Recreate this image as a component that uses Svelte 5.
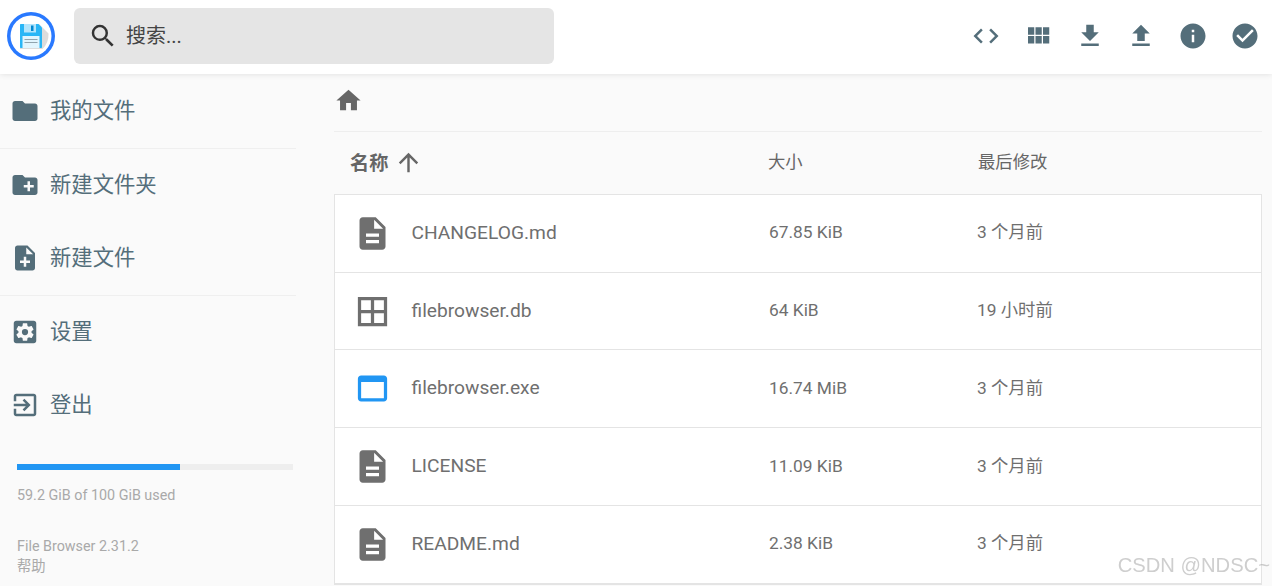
<script>
  const nav = [
    { label: '我的文件', icon: 'folder' },
    { label: '新建文件夹', icon: 'newfolder' },
    { label: '新建文件', icon: 'newfile' },
    { label: '设置', icon: 'settings' },
    { label: '登出', icon: 'logout' }
  ]
  const icons = {
    folder: 'M10 4H4c-1.1 0-2 .9-2 2v12c0 1.1.9 2 2 2h16c1.1 0 2-.9 2-2V8c0-1.1-.9-2-2-2h-8l-2-2z',
    newfolder: 'M20 6h-8l-2-2H4c-1.11 0-1.99.89-1.99 2L2 18c0 1.11.89 2 2 2h16c1.11 0 2-.89 2-2V8c0-1.11-.89-2-2-2zm-1 8h-3v3h-2v-3h-3v-2h3V9h2v3h3v2z',
    newfile: 'M14 2H6c-1.1 0-1.99.9-1.99 2L4 20c0 1.1.89 2 1.99 2H18c1.1 0 2-.9 2-2V8l-6-6zm2 14h-3v3h-2v-3H8v-2h3v-3h2v3h3v2zm-3-7V3.5L18.5 9H13z',
    settings: 'M19 3H5c-1.11 0-2 .9-2 2v14c0 1.1.89 2 2 2h14c1.11 0 2-.9 2-2V5c0-1.1-.89-2-2-2zm-1.75 9c0 .23-.02.46-.05.68l1.48 1.16c.13.11.17.3.08.45l-1.4 2.42c-.09.15-.27.21-.43.15l-1.74-.7c-.36.28-.76.51-1.18.69l-.26 1.85c-.03.17-.18.3-.35.3h-2.8c-.17 0-.32-.13-.35-.29l-.26-1.85c-.43-.18-.82-.41-1.18-.69l-1.74.7c-.16.06-.34 0-.43-.15l-1.4-2.42c-.09-.15-.05-.34.08-.45l1.48-1.16c-.03-.23-.05-.46-.05-.69 0-.23.02-.46.05-.68l-1.48-1.16c-.13-.11-.17-.3-.08-.45l1.4-2.42c.09-.15.27-.21.43-.15l1.74.7c.36-.28.76-.51 1.18-.69l.26-1.85c.03-.17.18-.3.35-.3h2.8c.17 0 .32.13.35.29l.26 1.85c.43.18.82.41 1.18.69l1.74-.7c.16-.06.34 0 .43.15l1.4 2.42c.09.15.05.34-.08.45l-1.48 1.16c.03.23.05.46.05.69zM12 9.5a2.5 2.5 0 1 0 0 5 2.5 2.5 0 0 0 0-5z',
    logout: 'M10.09 15.59L11.5 17l5-5-5-5-1.41 1.41L12.67 11H3v2h9.67l-2.58 2.59zM19 3H5c-1.11 0-2 .9-2 2v4h2V5h14v14H5v-4H3v4c0 1.1.89 2 2 2h14c1.1 0 2-.9 2-2V5c0-1.1-.9-2-2-2z'
  }
  const actions = [
    'M9.4 16.6L4.8 12l4.6-4.6L8 6l-6 6 6 6 1.4-1.4zm5.2 0l4.6-4.6-4.6-4.6L16 6l6 6-6 6-1.4-1.4z',
    'M4 11h5V5H4v6zm0 7h5v-6H4v6zm6 0h5v-6h-5v6zm6 0h5v-6h-5v6zm-6-7h5V5h-5v6zm6-6v6h5V5h-5z',
    'M19 9h-4V3H9v6H5l7 7 7-7zM5 18v2h14v-2H5z',
    'M9 16h6v-6h4l-7-7-7 7h4v6zm-4 2h14v2H5v-2z',
    'M12 2C6.48 2 2 6.48 2 12s4.48 10 10 10 10-4.48 10-10S17.52 2 12 2zm1 15h-2v-6h2v6zm0-8h-2V7h2v2z',
    'M12 2C6.48 2 2 6.48 2 12s4.48 10 10 10 10-4.48 10-10S17.52 2 12 2zm-2 15l-5-5 1.41-1.41L10 14.17l7.59-7.59L19 8l-9 9z'
  ]
  const doc = 'M14 2H6c-1.1 0-1.99.9-1.99 2L4 20c0 1.1.89 2 1.99 2H18c1.1 0 2-.9 2-2V8l-6-6zm2 16H8v-2h8v2zm0-4H8v-2h8v2zm-3-5V3.5L18.5 9H13z'
  const files = [
    { name: 'CHANGELOG.md', size: '67.85 KiB', time: '3 个月前', type: 'doc' },
    { name: 'filebrowser.db', size: '64 KiB', time: '19 小时前', type: 'db' },
    { name: 'filebrowser.exe', size: '16.74 MiB', time: '3 个月前', type: 'exe' },
    { name: 'LICENSE', size: '11.09 KiB', time: '3 个月前', type: 'doc' },
    { name: 'README.md', size: '2.38 KiB', time: '3 个月前', type: 'doc' }
  ]
  const used = 59.2
</script>

<header>
  <div class="logo">
    <svg viewBox="0 0 48 48" width="48" height="48">
      <circle cx="24" cy="24" r="24" fill="#2979ff" />
      <circle cx="24" cy="24" r="20.500" fill="#fff" />
      <path d="M13 12h19l9.500 9.500a20.500 20.500 0 0 1-6 15.500H13z" fill="#dcdcdc" />
      <path d="M13 12.800a.8.800 0 0 1 .8-.8h17.700l3.500 3.500v19.700a.8.800 0 0 1-.8.800H13.800a.8.800 0 0 1-.8-.8z" fill="#29b6f6" />
      <path d="M17 12h12v8.500H17z" fill="#b3e5fc" />
      <path d="M24 13.500h2.500v5.500H24z" fill="#0288d1" />
      <path d="M15.500 24h17v12h-17z" fill="#e1f5fe" />
      <path d="M17.500 27h13v1h-13zM17.500 30h13v1h-13z" fill="#90a4ae" />
    </svg>
  </div>
  <div class="search">
    <svg viewBox="0 0 24 24" width="30" height="30"><path fill="#333" d="M15.500 14h-.79l-.28-.27A6.471 6.471 0 0 0 16 9.500 6.500 6.500 0 1 0 9.500 16c1.610 0 3.090-.59 4.230-1.570l.27.28v.79l5 4.990L20.490 19l-4.990-5zm-6 0C7.010 14 5 11.990 5 9.500S7.010 5 9.500 5 14 7.010 14 9.500 11.990 14 9.500 14z" /></svg>
    <span>搜索...</span>
  </div>
  <div class="actions">
    {#each actions as d}
      <svg viewBox="0 0 24 24" width="30" height="30"><path fill="#546e7a" {d} /></svg>
    {/each}
  </div>
</header>

<div class="page">
  <nav>
    <div class="group first">
      <a href="#files"><svg viewBox="0 0 24 24" width="30" height="30"><path d={icons.folder} /></svg>{nav[0].label}</a>
    </div>
    <div class="group">
      {#each nav.slice(1, 3) as item}
        <a href="#new"><svg viewBox="0 0 24 24" width="30" height="30"><path d={icons[item.icon]} /></svg>{item.label}</a>
      {/each}
    </div>
    <div class="group plain">
      {#each nav.slice(3) as item}
        <a href="#more"><svg viewBox="0 0 24 24" width="30" height="30"><path d={icons[item.icon]} /></svg>{item.label}</a>
      {/each}
    </div>
    <div class="usage">
      <div class="track"><div class="fill" style="width: {used}%"></div></div>
      <p>59.2 GiB of 100 GiB used</p>
    </div>
    <div class="credits">
      <p>File Browser 2.31.2</p>
      <p>帮助</p>
    </div>
  </nav>

  <main>
    <div class="crumbs">
      <svg viewBox="0 0 24 24" width="29" height="29"><path fill="#666" d="M10 20v-6h4v6h5v-8h3L12 3 2 12h3v8z" /></svg>
    </div>
    <div class="head">
      <div class="c-name">
        <strong>名称</strong>
        <svg viewBox="0 0 24 24" width="29" height="29"><path fill="#666" d="M4 12l1.410 1.410L11 7.830V20h2V7.830l5.580 5.590L20 12l-8-8-8 8z" /></svg>
      </div>
      <div class="c-size">大小</div>
      <div class="c-time">最后修改</div>
    </div>
    <div class="list">
      {#each files as f}
        <div class="row">
          <div class="c-icon">
            {#if f.type === 'doc'}
              <svg viewBox="0 0 24 24" width="39" height="39"><path fill="#6f6f6f" d={doc} /></svg>
            {:else if f.type === 'db'}
              <svg viewBox="0 0 24 24" width="39" height="39"><path fill="#6f6f6f" d="M3 3v18h18V3H3zm8 16H5v-6h6v6zm0-8H5V5h6v6zm8 8h-6v-6h6v6zm0-8h-6V5h6v6z" /></svg>
            {:else}
              <svg viewBox="0 0 24 24" width="39" height="39"><path fill="#2196f3" d="M19 4H5c-1.110 0-2 .9-2 2v12c0 1.100.89 2 2 2h14c1.100 0 2-.9 2-2V6c0-1.100-.89-2-2-2zm0 14H5V8h14v10z" /></svg>
            {/if}
          </div>
          <div class="r-name">{f.name}</div>
          <div class="r-size">{f.size}</div>
          <div class="r-time">{f.time}</div>
        </div>
      {/each}
    </div>
  </main>
</div>

<div class="mark">CSDN @NDSC~</div>

<style>
  :global(html), :global(body) {
    height: 100%;
    overflow: hidden;
  }

  :global(body) {
    background: #fafafa;
    font-family: Roboto, "Noto Sans CJK SC", sans-serif;
  }

  header {
    height: 74px;
    background: #fff;
    box-shadow: 0 0 6px rgba(0, 0, 0, 0.12);
    display: flex;
    align-items: center;
    position: relative;
    padding: 0 12px 2px 7px;
    box-sizing: border-box;
  }

  .logo {
    width: 48px;
    height: 48px;
    margin-right: 19px;
  }

  .logo svg {
    display: block;
  }

  .search {
    width: 480px;
    height: 56px;
    background: #e5e5e5;
    border-radius: 6px;
    display: flex;
    align-items: center;
    gap: 8px;
    padding-left: 14px;
    box-sizing: border-box;
    color: #444;
    font-size: 20px;
    line-height: 24px;
  }

  .actions {
    margin-left: auto;
    display: flex;
    gap: 21.800px;
  }

  .actions svg {
    display: block;
  }

  .page {
    display: flex;
  }

  nav {
    width: 296px;
    flex: none;
    margin-right: 38px;
    box-sizing: border-box;
  }

  .group {
    border-bottom: 1px solid #efefef;
  }

  .group.plain {
    border-bottom: 0;
  }

  .group a {
    display: flex;
    align-items: center;
    height: 73px;
    gap: 10px;
    padding: 0 0 2px 10px;
    box-sizing: border-box;
    color: #546e7a;
    font-size: 21.330px;
    line-height: 26px;
    text-decoration: none;
  }

  .group.first a {
    height: 74px;
    padding-bottom: 1px;
  }

  .group a svg {
    fill: #546e7a;
    flex: none;
  }

  .usage {
    padding: 22px 3px 0 17px;
  }

  .track {
    height: 6px;
    background: #eee;
  }

  .fill {
    height: 100%;
    background: #2196f3;
  }

  .usage p {
    margin: 16px 0 0;
    font-size: 14.330px;
    line-height: 18px;
    color: #a9a9a9;
  }

  .credits {
    padding: 32px 0 0 17px;
    font-size: 14.330px;
    line-height: 20px;
    color: #a9a9a9;
  }

  .credits p {
    margin: 0;
  }

  main {
    width: 928px;
    flex: none;
  }

  .crumbs {
    height: 58px;
    display: flex;
    align-items: center;
    border-bottom: 1px solid #eee;
    box-sizing: border-box;
  }

  .crumbs svg {
    display: block;
    margin-bottom: 4px;
  }

  .head {
    height: 62px;
    display: flex;
    align-items: center;
    color: #666;
    font-size: 17.330px;
    line-height: 22px;
    padding-bottom: 2px;
    box-sizing: border-box;
  }

  .c-name {
    width: 434px;
    padding-left: 16px;
    box-sizing: border-box;
    display: flex;
    align-items: center;
    gap: 6px;
    font-size: 19.200px;
  }

  .c-name strong {
    margin-top: 3px;
  }

  .c-size {
    width: 210px;
  }

  .list {
    background: #fff;
    border: 1px solid #e4e4e4;
  }

  .row {
    height: 77.720px;
    box-sizing: border-box;
    display: flex;
    align-items: center;
    border-bottom: 1px solid #e4e4e4;
    color: #6f6f6f;
    font-size: 17.330px;
    line-height: 22px;
  }

  .c-icon {
    width: 76px;
    padding-left: 18px;
    box-sizing: border-box;
    flex: none;
  }

  .c-icon svg {
    display: block;
  }

  .r-name {
    width: 358px;
    font-size: 19.200px;
    padding: 0 0 1px 0.500px;
    box-sizing: border-box;
  }

  .r-size {
    width: 208px;
    padding-bottom: 2px;
  }

  .r-time {
    padding-bottom: 2px;
  }

  .mark {
    position: fixed;
    right: 2px;
    bottom: 9px;
    font-family: "Liberation Sans", sans-serif;
    font-size: 20.200px;
    color: rgba(165, 165, 165, 0.55);
  }
</style>
